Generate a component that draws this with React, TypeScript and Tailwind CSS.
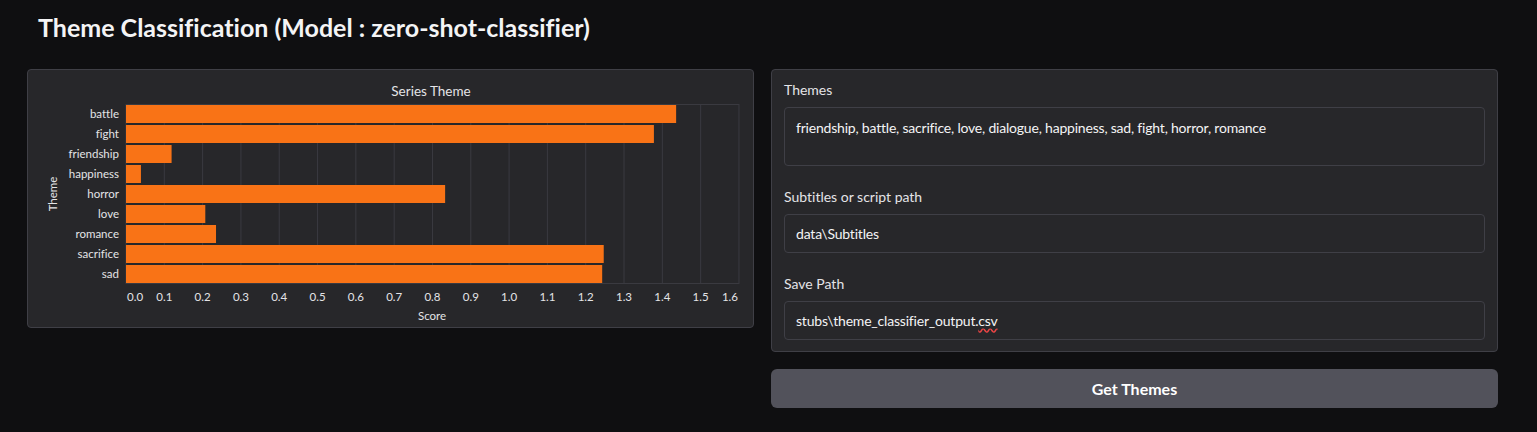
import React from "react";

const data: { name: string; v: number }[] = [
  { name: "battle", v: 1.436 },
  { name: "fight", v: 1.378 },
  { name: "friendship", v: 0.119 },
  { name: "happiness", v: 0.039 },
  { name: "horror", v: 0.833 },
  { name: "love", v: 0.207 },
  { name: "romance", v: 0.235 },
  { name: "sacrifice", v: 1.247 },
  { name: "sad", v: 1.243 },
];

const X0 = 98;
const Y0 = 34;
const SCALE = 383.1;
const STEP = 20;
const FONT = "'Lato', 'Noto Sans', sans-serif";

function Chart() {
  const ticks = Array.from({ length: 17 }, (_, i) => i / 10);
  const bottom = Y0 + data.length * STEP;
  const right = X0 + 1.6 * SCALE;
  return (
    <svg
      width={727}
      height={259}
      className="block"
      style={{ fontFamily: FONT, fontVariantLigatures: "none" }}
    >
      <text x={403} y={26} textAnchor="middle" fontSize={13.5} fill="#e4e4e7">
        Series Theme
      </text>
      {ticks.map((t, i) => {
        const x = X0 + t * SCALE;
        return (
          <line key={"g" + i} x1={x} x2={x} y1={Y0} y2={bottom} stroke="#3a3a40" strokeWidth={1} />
        );
      })}
      <line x1={X0} x2={right} y1={Y0 + 0.5} y2={Y0 + 0.5} stroke="#3a3a40" />
      <line x1={X0} x2={right} y1={bottom - 0.5} y2={bottom - 0.5} stroke="#3a3a40" />
      {data.map((d, i) => (
        <g key={d.name}>
          <rect x={X0} y={Y0 + i * STEP + 1} width={d.v * SCALE} height={18} fill="#f97316" />
          <text
            x={91}
            y={Y0 + i * STEP + 14}
            textAnchor="end"
            fontSize={11.5}
            fill="#e4e4e7"
          >
            {d.name}
          </text>
        </g>
      ))}
      {ticks.map((t, i) => {
        const x = X0 + t * SCALE;
        const anchor = i === 0 ? "start" : i === ticks.length - 1 ? "end" : "middle";
        const ox = i === 0 ? 1 : i === ticks.length - 1 ? -1 : 0;
        return (
          <text key={"t" + i} x={x + ox} y={231} textAnchor={anchor} fontSize={11.5} fill="#e4e4e7">
            {t.toFixed(1)}
          </text>
        );
      })}
      <text x={404} y={250} textAnchor="middle" fontSize={11.5} fill="#e4e4e7">
        Score
      </text>
      <text
        x={0}
        y={0}
        textAnchor="middle"
        fontSize={11.5}
        fill="#e4e4e7"
        transform="translate(29 124) rotate(-90)"
      >
        Theme
      </text>
    </svg>
  );
}

function Field({
  label,
  value,
  tall,
  spell,
}: {
  label: string;
  value: string;
  tall?: boolean;
  spell?: boolean;
}) {
  return (
    <div className="flex flex-col">
      <div className="h-[20px] leading-[20px] text-[14px] text-[#e4e4e7]">{label}</div>
      <div
        className={
          "mt-[7px] rounded-[4px] border border-[#3f3f46] bg-[#27272a] px-[11px] text-[14px] tracking-[-0.2px] text-[#f4f4f5] " +
          (tall ? "h-[59px] pt-[10px] leading-[20px]" : "h-[39px] flex items-center")
        }
      >
        {spell ? (
          <span>
            stubs\theme_classifier_output.
            <span className="underline decoration-wavy decoration-[#ef4444] underline-offset-2">csv</span>
          </span>
        ) : (
          value
        )}
      </div>
    </div>
  );
}

export default function App() {
  return (
    <div
      className="w-[1537px] h-[432px] bg-[#0f0f11] overflow-hidden"
      style={{ fontFamily: FONT, fontVariantLigatures: "none" }}
    >
      <div className="pl-[38px] pt-[10px] h-[69px]">
        <h1 className="text-[25px] leading-[34px] font-bold text-[#f4f4f5]">
          Theme Classification (Model : zero-shot-classifier)
        </h1>
      </div>
      <div className="pl-[27px] grid grid-cols-[727px_727px] gap-[17px] items-start">
        <div className="rounded-[4px] border border-[#3f3f46] bg-[#27272a] h-[259px] overflow-hidden">
          <Chart />
        </div>
        <div className="flex flex-col gap-[17px]">
          <div className="rounded-[4px] border border-[#3f3f46] bg-[#27272a] h-[283px] px-[12px] pt-[10px] flex flex-col gap-[21px]">
            <Field
              label="Themes"
              value="friendship, battle, sacrifice, love, dialogue, happiness, sad, fight, horror, romance"
              tall
            />
            <Field label="Subtitles or script path" value="data\Subtitles" />
            <Field label="Save Path" value="" spell />
          </div>
          <button className="h-[39px] rounded-[6px] bg-[#52525b] text-[16px] font-bold text-white">
            Get Themes
          </button>
        </div>
      </div>
    </div>
  );
}
